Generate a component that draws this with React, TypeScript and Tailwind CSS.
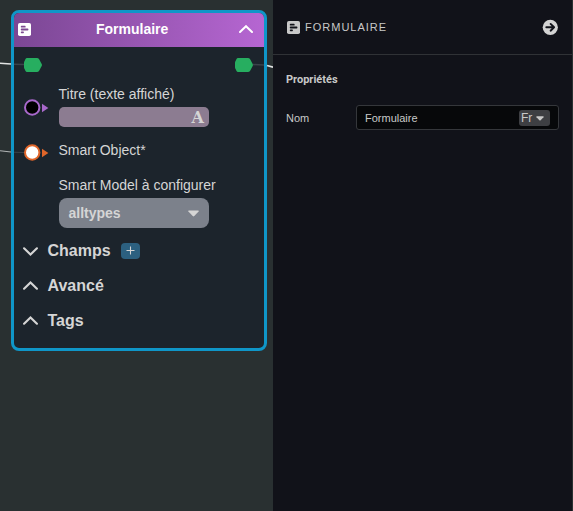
import React from "react";

function FormIcon({ className, ink }: { className: string; ink: string }) {
  return (
    <svg viewBox="0 0 13 13" className={className}>
      <rect width="13" height="13" rx="1.8" fill="currentColor" />
      <g fill={ink}>
        <rect x="2.8" y="2.8" width="4.8" height="1.8" rx="0.7" />
        <rect x="2.8" y="5.6" width="7.6" height="1.8" rx="0.7" />
        <rect x="2.8" y="8.5" width="3.1" height="1.8" rx="0.7" />
      </g>
    </svg>
  );
}

function Chevron({ up = false, className }: { up?: boolean; className: string }) {
  return (
    <svg viewBox="0 0 14 8" fill="none" stroke="currentColor" className={className}>
      <path d={up ? "M1 7 L7 1.2 L13 7" : "M1 1 L7 6.8 L13 1"} strokeWidth="2" strokeLinecap="round" />
    </svg>
  );
}

function Hex() {
  return (
    <svg viewBox="0 0 18 14" className="h-[14px] w-[18px]">
      <path d="M3 0H13Q14.2 0 15 1L17.7 6Q18.2 7 17.7 8L15 13Q14.2 14 13 14H3Q2 14 1.5 13L.3 10.5Q0 10 0 9V5Q0 4 .3 3.5L1.5 1Q2 0 3 0Z" fill="#27ae60" />
    </svg>
  );
}

function Port({ stroke, fill }: { stroke: string; fill: string }) {
  return (
    <svg viewBox="0 0 25 17" className="h-[17px] w-[25px]">
      <circle cx="8.2" cy="8.5" r="7.2" fill={fill} stroke={stroke} strokeWidth="2" />
      <path d="M18 4.8V13.3L24.4 9.1Z" fill={stroke} />
    </svg>
  );
}

function Section({ title, open = false }: { title: string; open?: boolean }) {
  return (
    <div className="flex h-[35px] items-center pl-[9px] text-base font-bold">
      <Chevron up={!open} className={open ? "mt-[2px] h-[9px] w-[15px]" : "mb-px h-[9px] w-[15px]"} />
      <span className="ml-[9.5px] leading-5">{title}</span>
      {open && (
        <span className="ml-[10.5px] flex h-4 w-[19px] items-center justify-center rounded bg-[#2c6080]">
          <svg viewBox="0 0 9 9" className="h-[9px] w-[9px]" stroke="currentColor" strokeWidth="1.1">
            <path d="M4.5 .5V8.5M.5 4.5H8.5" />
          </svg>
        </span>
      )}
    </div>
  );
}

function NodeCard() {
  return (
    <div className="h-[341px] w-[256px] overflow-hidden rounded-[8px] border-3 border-[#0f96c8] bg-[#1c242c] text-sm text-[#d5d5d5]">
      <div className="flex h-[34px] items-center bg-linear-to-r from-[#7b4794] to-[#b666d2] pr-[11px] pb-[2px] pl-1 text-white">
        <FormIcon className="h-[13px] w-[13px]" ink="#7c4990" />
        <span className="ml-[65px] flex-1 font-bold">Formulaire</span>
        <Chevron up className="h-[8px] w-[14px]" />
      </div>
      <div className="flex h-9 items-center justify-between pr-[11px] pl-[10px]">
        <Hex />
        <Hex />
      </div>
      <div className="flex h-[50px] pl-[9.5px]">
        <div className="w-[35px] pt-4">
          <Port stroke="#a868cb" fill="#000" />
        </div>
        <div>
          <div className="h-6 pt-px leading-5">Titre (texte affiché)</div>
          <div className="flex h-5 w-[150.5px] items-center justify-end rounded-[5px] bg-[#8c7c91] pt-px pr-[5px] font-['DejaVu_Serif',serif] text-base leading-5 font-bold">A</div>
        </div>
      </div>
      <div className="flex h-[42px] pl-[9.5px]">
        <div className="w-[35px] pt-[11px]">
          <Port stroke="#e0662a" fill="#fff" />
        </div>
        <div className="pt-[7px] leading-5">Smart Object*</div>
      </div>
      <div className="h-[58px] pl-[44.5px]">
        <div className="h-[23px] leading-5">Smart Model à configurer</div>
        <div className="flex h-[30px] w-[150.5px] items-center justify-between rounded-lg bg-[#7c818b] pr-[10px] pl-[10px] font-bold">
          <span>alltypes</span>
          <svg viewBox="0 0 11 7" className="mt-px h-[7px] w-[11px]" fill="currentColor">
            <path d="M.6 .6H10.4Q11 1 10.6 1.5L6.3 6Q5.5 6.8 4.7 6L.4 1.5Q0 1 .6 .6Z" />
          </svg>
        </div>
      </div>
      <Section title="Champs" open />
      <Section title="Avancé" />
      <Section title="Tags" />
    </div>
  );
}

function PropertiesPanel() {
  return (
    <aside className="flex-1 border-r border-[#293031] bg-[#111219] text-[11px] text-[#c8c8c8]">
      <header className="flex h-[55px] items-center border-b border-[#303236] pr-[14px] pl-[14px]">
        <FormIcon className="h-[13px] w-[13px]" ink="#111219" />
        <span className="ml-[5px] flex-1 tracking-[1px]">FORMULAIRE</span>
        <svg viewBox="0 0 16 16" className="h-4 w-4">
          <circle cx="8.3" cy="8.3" r="7.6" fill="#d3d3d3" />
          <path d="M4.3 8.3H12M8.6 4.9L12.1 8.3L8.6 11.7" fill="none" stroke="#111219" strokeWidth="1.9" strokeLinecap="round" strokeLinejoin="round" />
        </svg>
      </header>
      <div className="pr-[13px] pl-[13px]">
        <h2 className="flex h-[50px] items-center font-[Roboto,sans-serif] text-[11px] font-bold">Propriétés</h2>
        <div className="flex items-center justify-between">
          <label className="pt-[2px]">Nom</label>
          <div className="flex h-[25px] w-[203px] items-center justify-between rounded-[3px] border border-[#35373b] bg-[#07080a] pr-2 pl-2">
            <span className="pt-[2px]">Formulaire</span>
            <span className="flex h-4 w-[31px] items-center gap-[4px] rounded-[3px] bg-[#3e3f43] pl-[2px] text-[12px]">
              <span>Fr</span>
              <svg viewBox="0 0 8 5" className="mt-px h-[5px] w-[8px]" fill="currentColor">
                <path d="M.7 .2H7.3Q8 .6 7.5 1.2L4.6 4.2Q4 4.8 3.4 4.2L.5 1.2Q0 .6 .7 .2Z" />
              </svg>
            </span>
          </div>
        </div>
      </div>
    </aside>
  );
}

export default function App() {
  return (
    <div className="flex h-[511px] w-[573px] overflow-hidden bg-[#293031] font-['Liberation_Sans',Arial,sans-serif]">
      <main className="relative w-[273px] pt-[10px] pl-[11px]">
        <NodeCard />
        <svg viewBox="0 0 273 511" className="pointer-events-none absolute top-0 left-0 h-[511px] w-[273px]" fill="none">
          <path d="M0 63.2L11 64" stroke="#e1e3e3" strokeWidth="1.6" />
          <path d="M14 64.2L24 64.5" stroke="#3b434a" strokeWidth="1.5" />
          <path d="M0 150.8L11 152" stroke="#b1b5b5" strokeWidth="1.1" />
          <path d="M14 152.2L24 152.5" stroke="#3b434a" strokeWidth="1.1" />
          <path d="M253 64.5L264 65" stroke="#3b434a" strokeWidth="1.5" />
          <path d="M267 65.5L273 67.2" stroke="#e1e3e3" strokeWidth="1.8" />
        </svg>
      </main>
      <PropertiesPanel />
    </div>
  );
}
